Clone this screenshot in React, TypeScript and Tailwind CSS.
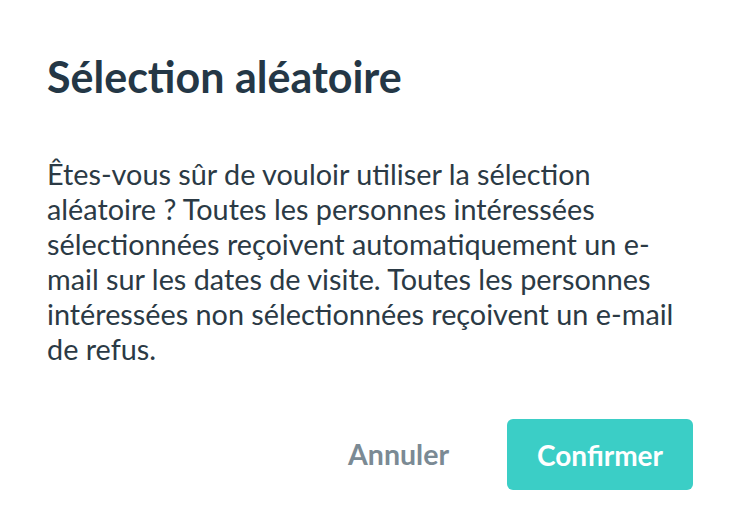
export default function App() {
  return (
    <div className="w-[742px] h-[528px] bg-white px-[47px] pt-[51px] flex flex-col" style={{ fontFamily: "Lato, 'Noto Sans', sans-serif" }}>
      <h1 className="text-[43px] leading-[52px] font-bold text-[#243746]">Sélection aléatoire</h1>
      <p className="mt-[54px] text-[28.8px] leading-[35px] text-[#2b3a45]">
        Êtes-vous sûr de vouloir utiliser la sélection aléatoire ? Toutes les personnes intéressées sélectionnées reçoivent automatiquement un e-mail sur les dates de visite. Toutes les personnes intéressées non sélectionnées reçoivent un e-mail de refus.
      </p>
      <div className="mt-[52px] flex justify-end items-center gap-[58px] pr-[2px]">
        <button className="text-[28.5px] font-bold text-[#7b8a94]">Annuler</button>
        <button className="h-[71px] px-[30px] rounded-[6px] bg-[#3bcec6] text-white text-[28px] font-bold">Confirmer</button>
      </div>
    </div>
  );
}
